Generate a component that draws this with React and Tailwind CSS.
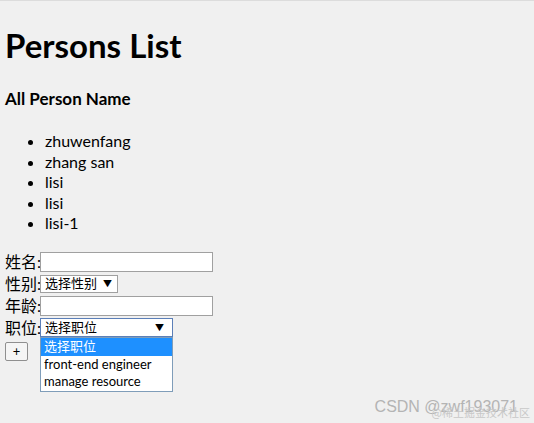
export default function App() {
  const names = ["zhuwenfang", "zhang san", "lisi", "lisi", "lisi-1"];
  const positions = ["选择职位", "front-end engineer", "manage resource"];

  return (
    <div className="relative min-h-screen overflow-hidden border-t border-[#dcdcdc] bg-[#f0f0f0] px-[5px] text-black font-['Lato','Noto_Sans_CJK_SC',sans-serif]">
      <h1 className="mt-[25px] text-[33px] font-bold leading-[38px]">Persons List</h1>
      <h4 className="mt-[25px] text-[17px] font-bold leading-[20px]">All Person Name</h4>

      <ul className="mt-[22px] list-disc pl-[40px] text-[16px] leading-[20.5px]">
        {names.map((n, i) => (
          <li key={i}>{n}</li>
        ))}
      </ul>

      <div className="mt-[17px] flex flex-col text-[16px]">
        <div className="flex h-[22px] items-center">
          <span className="w-[35px] shrink-0 whitespace-nowrap">姓名:</span>
          <div className="h-[20px] w-[173px] border border-[#a0a0a0] bg-white" />
        </div>
        <div className="flex h-[22px] items-center">
          <span className="w-[35px] shrink-0 whitespace-nowrap">性别:</span>
          <div className="flex h-[18px] w-[78px] items-center justify-between border border-[#a0a0a0] bg-white pl-[4px] pr-[5px] text-[13px] leading-none">
            <span className="whitespace-nowrap">选择性别</span>
            <span className="text-[9px]">▼</span>
          </div>
        </div>
        <div className="flex h-[22px] items-center">
          <span className="w-[35px] shrink-0 whitespace-nowrap">年龄:</span>
          <div className="h-[20px] w-[173px] border border-[#a0a0a0] bg-white" />
        </div>
        <div className="flex h-[22px] items-center">
          <span className="w-[35px] shrink-0 whitespace-nowrap">职位:</span>
          <div className="relative">
            <div className="flex h-[19px] w-[133px] items-center justify-between border border-[#5b7fb8] bg-white pl-[4px] pr-[8px] text-[13px] leading-none">
              <span className="whitespace-nowrap">选择职位</span>
              <span className="text-[9px]">▼</span>
            </div>
            <div className="absolute left-0 top-[19px] z-10 w-[133px] border border-[#7f9db9] bg-white text-[13px] leading-[17.5px]">
              {positions.map((p, i) => (
                <div key={p} className={i === 0 ? "whitespace-nowrap bg-[#1e90ff] px-[3px] text-white" : "whitespace-nowrap px-[3px]"}>
                  {p}
                </div>
              ))}
            </div>
          </div>
        </div>
        <div className="mt-[3px] flex">
          <button className="flex h-[19px] w-[23px] items-center justify-center rounded-[2px] border border-[#8f8f8f] bg-[#f5f5f5] text-[13px] leading-none">+</button>
        </div>
      </div>

      <div className="absolute bottom-[8px] right-[16px] text-[16px] leading-none text-[#b4b4b4] font-['Liberation_Sans','Noto_Sans_CJK_SC',sans-serif]">
        CSDN @zwf193071
      </div>
      <div className="absolute bottom-[5px] right-[4px] text-[11px] leading-none text-[#c8c8c8] font-['Noto_Sans_CJK_SC',sans-serif]">
        @稀土掘金技术社区
      </div>
    </div>
  );
}
